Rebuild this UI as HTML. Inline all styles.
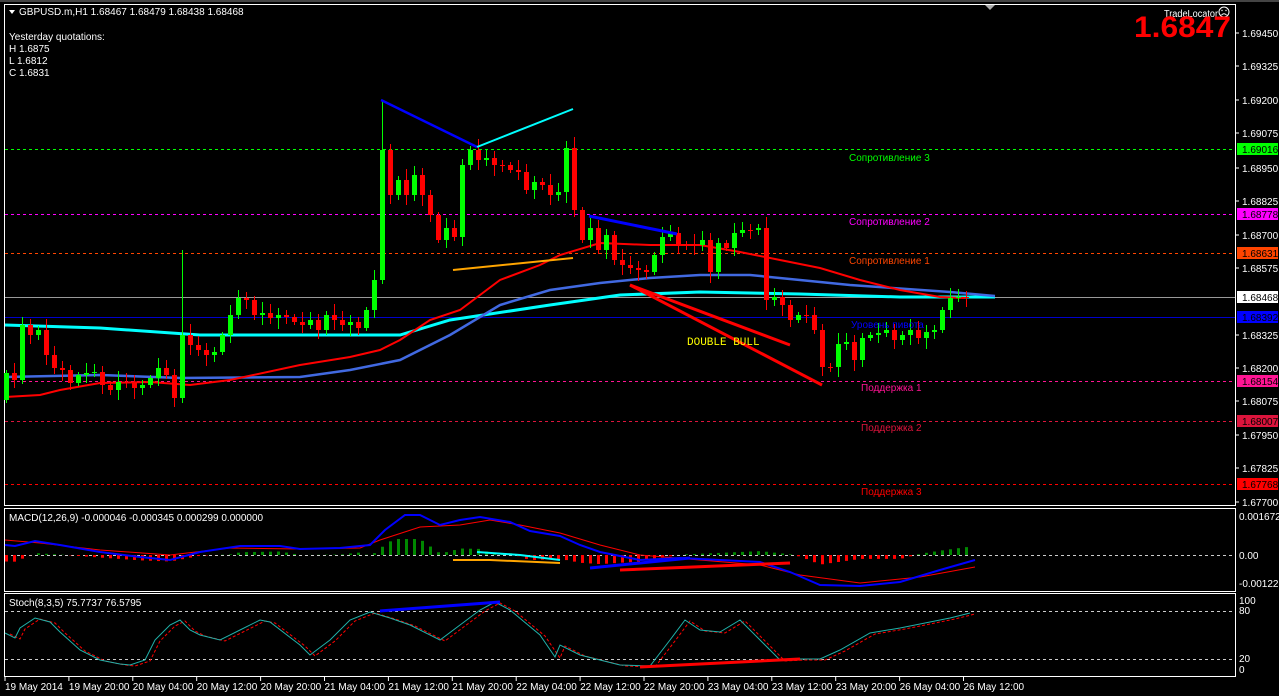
<!DOCTYPE html>
<html><head><meta charset="utf-8"><style>
html,body{margin:0;padding:0;background:#000;width:1279px;height:696px;overflow:hidden}
svg{display:block}
text{font-family:"Liberation Sans",sans-serif;font-size:10px}
</style></head><body>
<svg id="s" width="1279" height="696" xmlns="http://www.w3.org/2000/svg">
<rect width="1279" height="696" fill="#000"/>
<rect x="4.5" y="4.5" width="1231" height="501" fill="none" stroke="#fff"/>
<rect x="4.5" y="508.5" width="1231" height="83" fill="none" stroke="#fff"/>
<rect x="4.5" y="593.5" width="1231" height="83" fill="none" stroke="#fff"/>
<line x1="0" y1="1" x2="1279" y2="1" stroke="#888"/>
<polygon points="985,5 995,5 990,10" fill="#aaa"/>
<g id="lv"></g>
<g id="ma" fill="none"></g>
<g id="cd"></g>
<g id="pt"></g>
<g id="mc"></g>
<g id="st"></g>
<g id="ax" fill="#fff"></g>
<polygon points="9,10 15,10 12,14" fill="#fff"/>
<text x="19" y="15" fill="#fff">GBPUSD.m,H1  1.68467 1.68479 1.68438 1.68468</text>
<text x="9" y="40" fill="#fff">Yesterday quotations:</text>
<text x="9" y="52" fill="#fff">H 1.6875</text>
<text x="9" y="64" fill="#fff">L 1.6812</text>
<text x="9" y="76" fill="#fff">C 1.6831</text>
<text x="1164" y="17" fill="#fff" style="font-size:10px" textLength="54" lengthAdjust="spacingAndGlyphs">TradeLocator</text>
<circle cx="1224" cy="12" r="5" fill="none" stroke="#fff"/>
<path d="M1221.5 15 Q1224 12.5 1226.5 15" stroke="#fff" fill="none"/>
<circle cx="1222" cy="10.5" r=".7" fill="#fff"/><circle cx="1226" cy="10.5" r=".7" fill="#fff"/>
<text x="1134" y="37" fill="#f00" style="font-size:30px;font-weight:bold" textLength="97" lengthAdjust="spacingAndGlyphs">1.6847</text>
<text x="687" y="345" fill="#ff0" style="font-family:'Liberation Mono',monospace;font-size:11px">DOUBLE BULL</text>
<text x="849" y="161" fill="#0f0">Сопротивление 3</text>
<text x="849" y="225" fill="#f0f">Сопротивление 2</text>
<text x="849" y="264" fill="#ff4500">Сопротивление 1</text>
<text x="851" y="328" fill="#00f">Уровень пивота</text>
<text x="861" y="391" fill="#ff1493">Поддержка 1</text>
<text x="861" y="431" fill="#dc143c">Поддержка 2</text>
<text x="861" y="495" fill="#f00">Поддержка 3</text>
<text x="9" y="521" fill="#fff">MACD(12,26,9) -0.000046 -0.000345 0.000299 0.000000</text>
<text x="9" y="606" fill="#fff">Stoch(8,3,5) 75.7737 76.5795</text>
</svg>
<script>
const NS="http://www.w3.org/2000/svg";
function el(p,t,a,txt){const e=document.createElementNS(NS,t);for(const k in a)e.setAttribute(k,a[k]);if(txt!=null)e.textContent=txt;document.getElementById(p).appendChild(e);return e;}
function pl(p,pts,c,w,extra){const a={points:pts.map(q=>q.join(',')).join(' '),stroke:c,'stroke-width':w,fill:'none'};Object.assign(a,extra||{});el(p,'polyline',a);}
[[149,'#0f0'],[214,'#f0f'],[253,'#ff4500'],[381,'#ff1493'],[421,'#dc143c'],[484,'#f00']].forEach(l=>el('lv','line',{x1:5,x2:1235,y1:l[0]+.5,y2:l[0]+.5,stroke:l[1],'stroke-dasharray':'3,3'}));
el('lv','line',{x1:5,x2:1235,y1:297.5,y2:297.5,stroke:'#999'});
el('lv','line',{x1:5,x2:1235,y1:317.5,y2:317.5,stroke:'#00c'});
pl('ma',[[5,325],[100,328],[200,335],[400,335],[450,320],[550,305],[620,295],[700,292],[800,294],[900,297],[995,297]],'#0ff',3);
pl('ma',[[5,377],[100,375],[180,378],[300,377],[350,370],[400,360],[450,335],[500,305],[550,290],[600,283],[650,278],[700,275],[750,275],[800,280],[850,285],[950,292],[995,296]],'#4169e1',2.5);
pl('ma',[[5,397],[40,395],[60,390],[100,383],[150,382],[190,385],[230,380],[300,365],[350,357],[380,350],[400,340],[430,320],[460,310],[480,295],[500,280],[540,265],[560,255],[600,243],[650,245],[700,245],[740,252],[780,260],[820,268],[860,280],[900,290],[940,297],[965,298]],'#f00',2);
const C=[373,380,325,335,330,355,368,370,383,375,373,372,385,390,382,382,388,385,378,368,375,398,335,345,350,355,352,335,315,298,300,315,313,318,315,317,322,325,320,330,315,320,325,322,328,310,280,150,195,180,195,175,195,215,240,228,237,165,150,160,158,165,165,170,172,190,182,185,195,192,148,210,240,228,250,235,260,265,268,270,272,255,237,233,245,245,245,240,272,243,248,233,230,230,228,300,297,305,320,315,315,330,367,367,344,342,360,338,335,333,330,340,335,330,338,332,330,310,298,297,298];
const SP={22:250,47:100,71:137};
let prev=400;
C.forEach((c,i)=>{const x=6+8*i;const o=prev;const t=Math.min(o,c),b=Math.max(o,c);const up=c<o;const col=up?'#0f0':'#f00';
 const h=SP[i]||t-(3+(i*7)%9);const lo=b+(3+(i*5)%9);
 el('cd','line',{x1:x+.5,x2:x+.5,y1:h,y2:lo,stroke:col});
 el('cd','rect',{x:x-2,y:t,width:5,height:Math.max(1,b-t),fill:col});prev=c;});
pl('pt',[[381,100],[477,147]],'#00f',2.5);pl('pt',[[477,147],[573,109]],'#0ff',2);
pl('pt',[[453,270],[573,258]],'#ffa500',2);pl('pt',[[589,216],[677,234]],'#00f',3);
pl('pt',[[630,285],[790,345]],'#f00',3);pl('pt',[[630,285],[822,385]],'#f00',3);
el('mc','line',{x1:5,x2:1235,y1:555.5,y2:555.5,stroke:'#ccc','stroke-dasharray':'3,3'});
const MB=[[5,545],[15,546],[35,541],[60,545],[100,552],[140,557],[170,560],[200,552],[240,546],[280,546],[300,549],[340,548],[370,545],[385,530],[405,515],[420,515],[440,525],[460,520],[480,517],[510,522],[530,531],[560,536],[580,545],[600,552],[640,560],[680,558],[720,560],[760,562],[790,572],[820,585],[860,586],[900,582],[940,570],[975,560]];
const MR=[[5,540],[40,543],[100,550],[170,555],[230,548],[300,549],[360,548],[380,540],[420,527],[460,525],[490,520],[520,525],[560,533],[600,545],[640,555],[700,560],[760,565],[800,575],[860,583],[920,577],[975,567]];
function itp(a,x){for(let i=1;i<a.length;i++)if(x<=a[i][0]){const p=a[i-1],q=a[i];return p[1]+(q[1]-p[1])*(x-p[0])/(q[0]-p[0]);}return a[a.length-1][1];}
for(let x=6;x<=970;x+=8){let d=(itp(MR,x)-itp(MB,x))*1.3;d=Math.max(-16,Math.min(16,d));
 if(d>0)el('mc','rect',{x:x-1,y:555-d,width:3,height:d,fill:'#080'});else el('mc','rect',{x:x-1,y:555,width:3,height:-d,fill:'#f00'});}
pl('mc',MR,'#f00',1);pl('mc',MB,'#00f',2);
pl('mc',[[453,560],[490,560],[560,563]],'#ffa500',2);pl('mc',[[477,552],[520,555],[560,560]],'#0ff',2);
pl('mc',[[590,568],[690,558]],'#00f',3);pl('mc',[[620,570],[790,563]],'#f00',3);
[611,659].forEach(y=>el('st','line',{x1:5,x2:1235,y1:y+.5,y2:y+.5,stroke:'#ccc','stroke-dasharray':'3,3'}));
const S=[[5,633],[15,638],[20,628],[35,618],[50,622],[60,632],[80,650],[100,660],[120,664],[130,665],[145,660],[155,640],[170,625],[180,620],[190,630],[200,635],[220,640],[240,630],[260,620],[270,622],[300,645],[310,655],[330,640],[350,620],[370,612],[390,618],[410,625],[440,640],[460,625],[480,610],[495,602],[510,610],[540,635],[555,657],[560,645],[580,655],[600,660],[620,665],[650,666],[670,640],[685,620],[700,630],[720,632],[740,620],[760,640],[780,660],[800,659],[820,659],[840,650],[870,633],[900,628],[930,622],[950,618],[970,613]];
pl('st',S.map(p=>[p[0]+5,p[1]+1]),'#f00',1,{'stroke-dasharray':'3,2'});
pl('st',S,'#20b2aa',1);
pl('st',[[380,611],[500,602]],'#00f',3);pl('st',[[640,667],[800,659]],'#f00',3);
[[33,'1.69450'],[66,'1.69325'],[100,'1.69200'],[133,'1.69075'],[168,'1.68950'],[201,'1.68825'],[235,'1.68700'],[268,'1.68575'],[335,'1.68325'],[368,'1.68200'],[401,'1.68075'],[435,'1.67950'],[468,'1.67825'],[502,'1.67700']].forEach(a=>{el('ax','line',{x1:1236,x2:1239,y1:a[0],y2:a[0],stroke:'#fff'});el('ax','text',{x:1242,y:a[0]+4},a[1]);});
[[149,'1.69016','#0f0'],[214,'1.68778','#f0f'],[253,'1.68631','#ff4500'],[297,'1.68468','#fff'],[317,'1.68392','#00f'],[381,'1.68154','#ff1493'],[421,'1.68007','#dc143c'],[484,'1.67768','#f00']].forEach(a=>{el('ax','rect',{x:1237,y:a[0]-6,width:41,height:12,fill:a[2]});el('ax','text',{x:1242,y:a[0]+4,fill:'#000'},a[1]);});
[[520,'0.001672'],[559,'0.00'],[587,'-0.001228'],[604,'100'],[614,'80'],[662,'20'],[673,'0']].forEach(a=>el('ax','text',{x:1239,y:a[0]},a[1]));
const T=['19 May 2014','19 May 20:00','20 May 04:00','20 May 12:00','20 May 20:00','21 May 04:00','21 May 12:00','21 May 20:00','22 May 04:00','22 May 12:00','22 May 20:00','23 May 04:00','23 May 12:00','23 May 20:00','26 May 04:00','26 May 12:00'];
T.forEach((t,i)=>{const x=5+i*63.9;el('ax','line',{x1:x,x2:x,y1:677,y2:681,stroke:'#fff'});el('ax','text',{x:x,y:690},t);});
</script>
</body></html>
